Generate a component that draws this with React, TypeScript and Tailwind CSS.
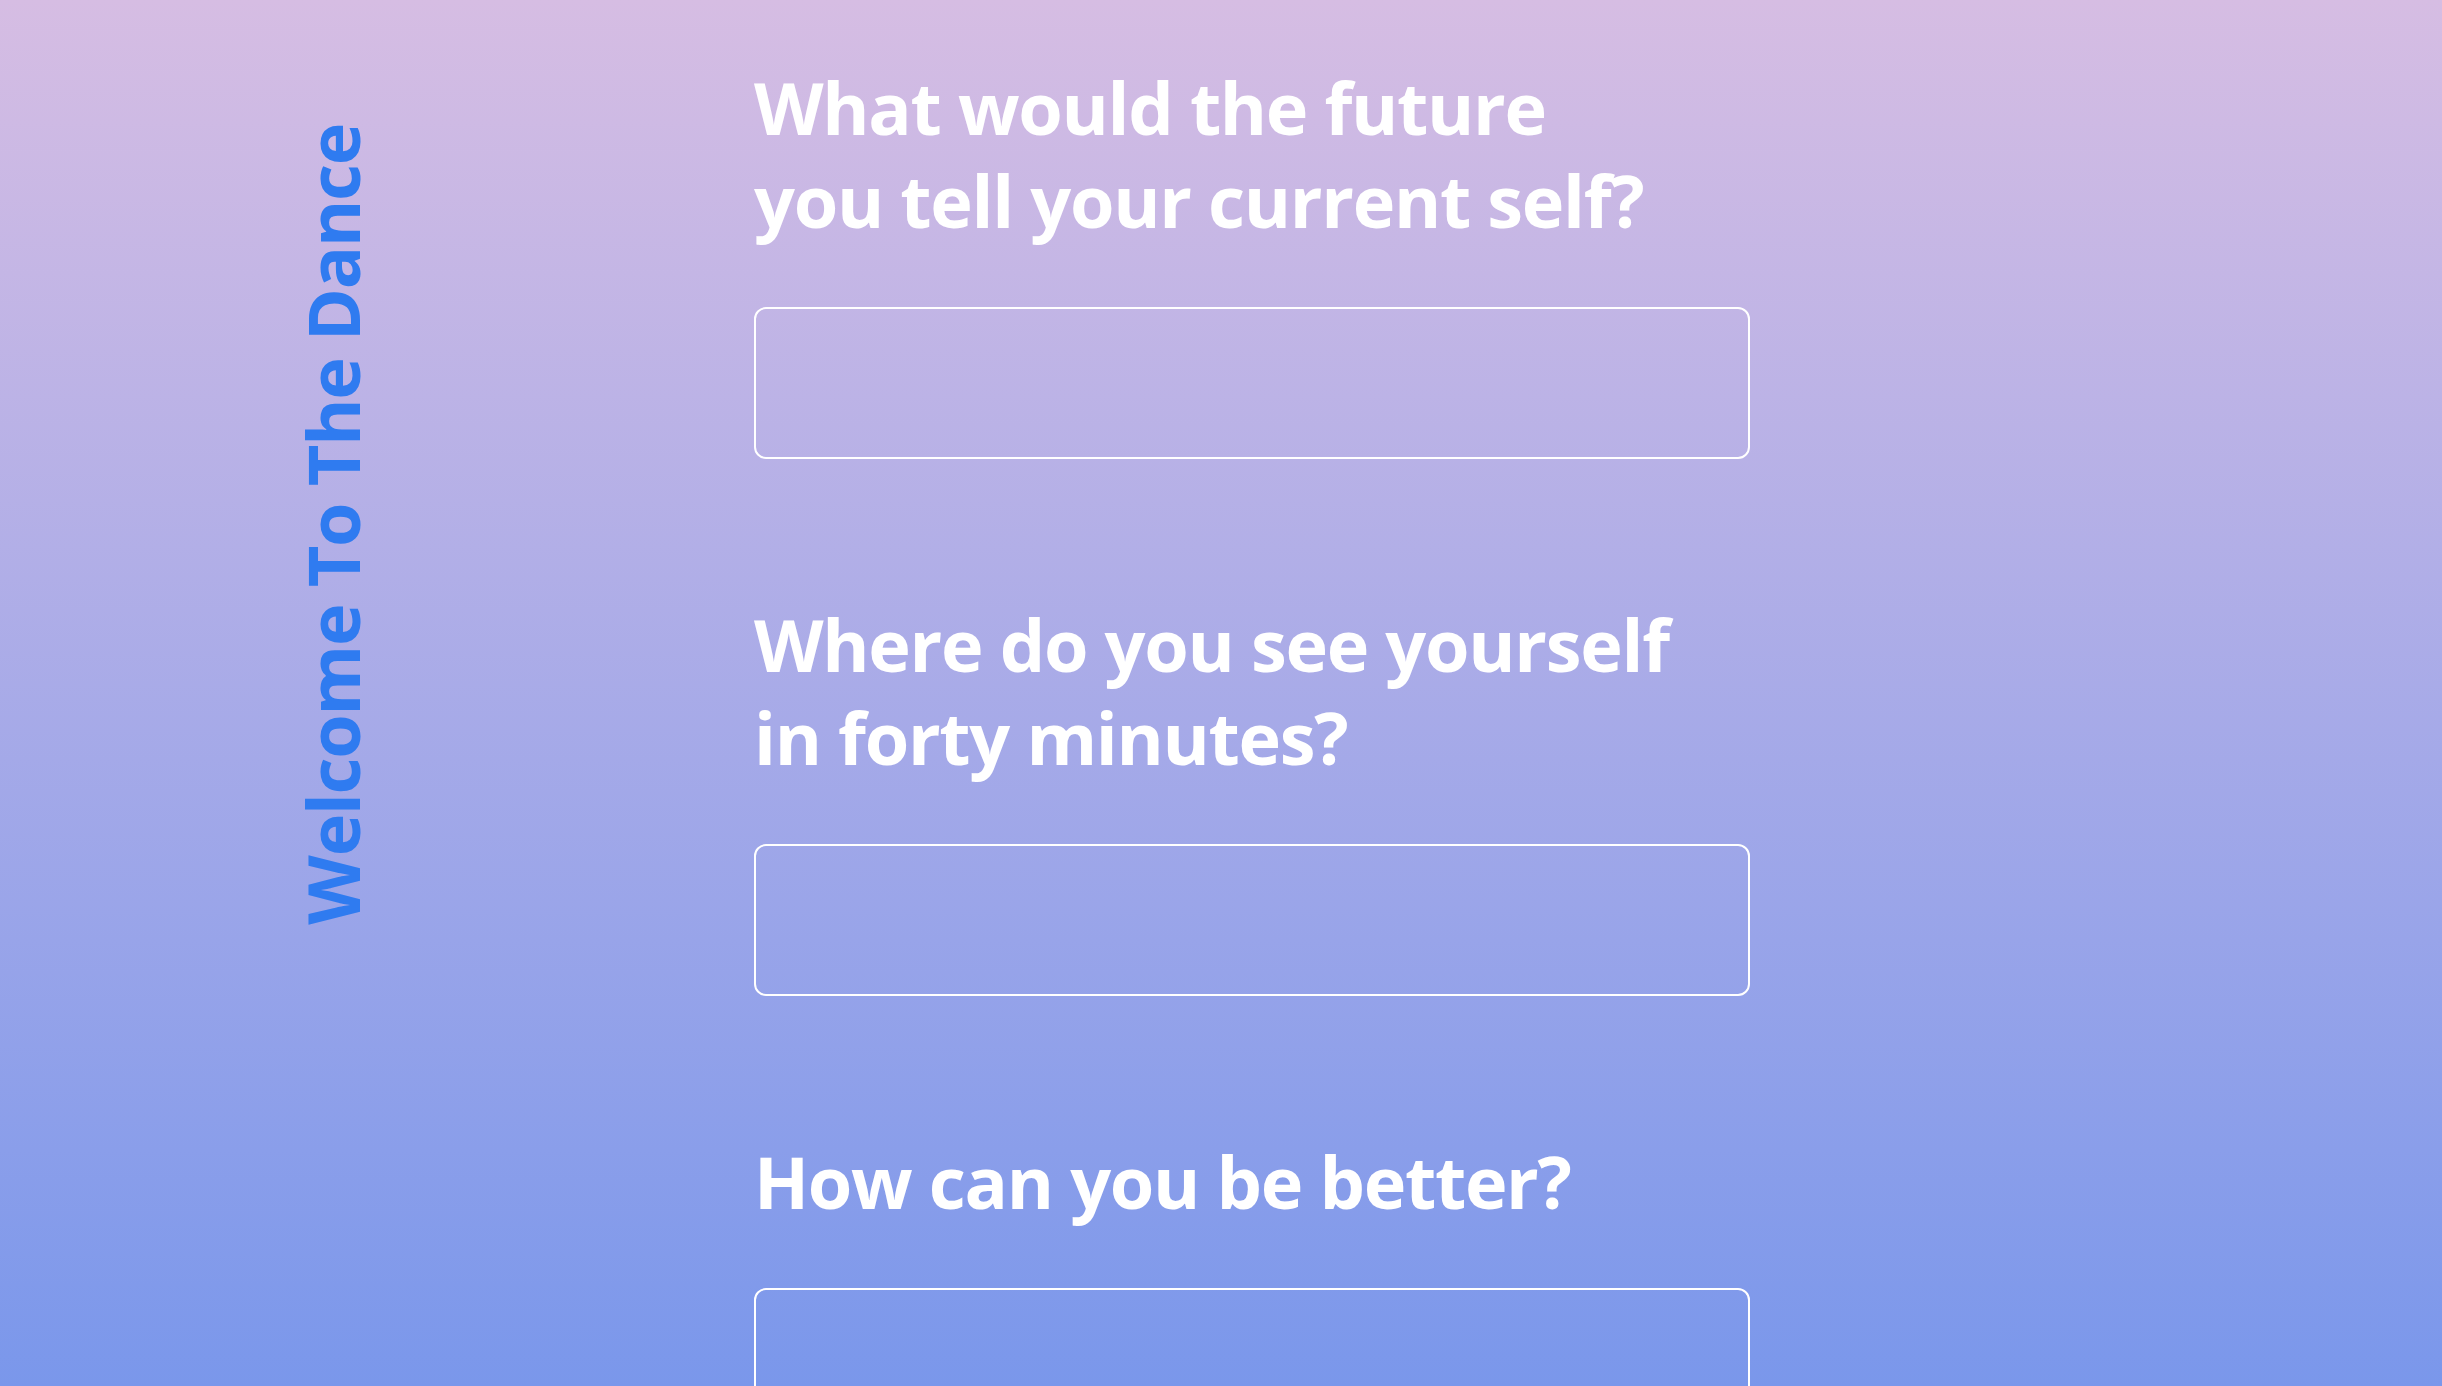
const questions = [
  ["What would the future", "you tell your current self?"],
  ["Where do you see yourself", "in forty minutes?"],
  ["How can you be better?"],
];

export default function App() {
  return (
    <div className="flex h-[1386px] w-full overflow-hidden bg-gradient-to-b from-[#d6bde3] to-[#7a97eb] font-['Open_Sans',sans-serif]">
      <aside className="w-[754px] shrink-0 pl-[296px] pt-[124px]">
        <h2 className="rotate-180 text-[72px] font-bold leading-[72px] tracking-[-0.018em] text-[#2f7bf0] [writing-mode:vertical-rl]">
          Welcome To The Dance
        </h2>
      </aside>

      <main className="flex w-[996px] flex-col gap-[139px] pt-[61px]">
        {questions.map((lines, i) => (
          <section key={i} className="flex flex-col gap-[60px]">
            <h1 className="text-[72px] font-bold leading-[93px] tracking-[-0.018em] text-white">
              {lines.map((l, j) => (
                <span key={j} className="block">
                  {l}
                </span>
              ))}
            </h1>
            <textarea className="h-[152px] w-full resize-none rounded-[12px] border-2 border-white bg-transparent outline-none" />
          </section>
        ))}
      </main>
    </div>
  );
}
